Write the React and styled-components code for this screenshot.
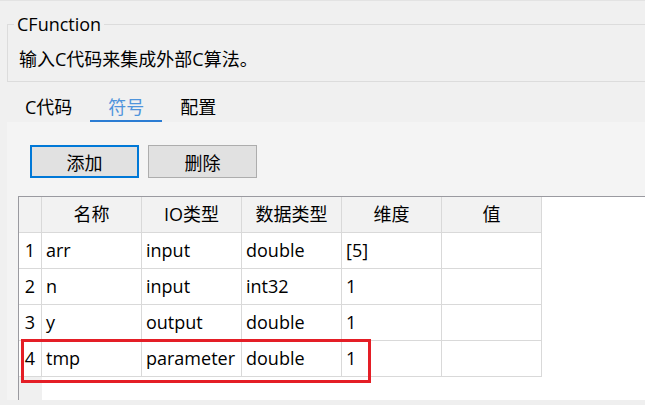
import React from 'react'
import styled, { createGlobalStyle } from 'styled-components'

const GlobalStyle = createGlobalStyle`
    html, body {
        margin: 0;
        padding: 0;
        background: #f0f0f0;
    }
    body {
        font-family: "Open Sans", "Noto Sans CJK SC", sans-serif;
        font-size: 18px;
        color: #000;
    }
`

const Window = styled.div`
    width: 645px;
    height: 405px;
    box-sizing: border-box;
    overflow: hidden;
    border-top: 1px solid #e3e3e3;
    padding-left: 7px;
    display: flex;
    flex-direction: column;
`

const GroupBox = styled.fieldset`
    margin: 11px 0 0 0;
    padding: 0 0 10px 0;
    border: 1px solid #dcdcdc;
    border-right: none;
    min-width: 0;
`

const Legend = styled.legend`
    margin-left: 6px;
    padding: 0 3px;
    line-height: 24px;
`

const Description = styled.div`
    padding: 11px 0 0 11px;
    line-height: 24px;
`

const TabBar = styled.div`
    display: flex;
    height: 40px;
`

const Tab = styled.div`
    box-sizing: border-box;
    height: 40px;
    padding: 13px 18px 0;
    line-height: 24px;
    color: ${p => (p.$active ? '#4f94dc' : '#000')};
    border-bottom: 2px solid ${p => (p.$active ? '#2b7cd3' : 'transparent')};
`

const Panel = styled.div`
    flex: 1;
    background: #f4f4f4;
    display: flex;
    flex-direction: column;
    padding-top: 23px;
    min-height: 0;
`

const ButtonRow = styled.div`
    display: flex;
    gap: 9px;
    margin-left: 23px;
`

const Button = styled.button`
    width: 109px;
    height: 33px;
    box-sizing: border-box;
    background: #e1e1e1;
    border: ${p => (p.$focused ? '2px solid #0078d7' : '1px solid #adadad')};
    font: inherit;
    color: #000;
    padding: 0;
`

const TableFrame = styled.div`
    position: relative;
    flex: 1;
    margin: 18px 0 0 11px;
    border-top: 1px solid #9a9aa0;
    border-left: 1px solid #9a9aa0;
    background: #fff;
    display: grid;
    grid-template-columns: 23px repeat(5, 100px) 1fr;
    grid-template-rows: repeat(5, 36px) 1fr;
`

const Cell = styled.div`
    box-sizing: border-box;
    border-right: 1px solid #d9d9d9;
    border-bottom: 1px solid #d9d9d9;
    background: ${p => (p.$head ? '#f2f2f2' : '#fff')};
    text-align: ${p => (p.$center ? 'center' : 'left')};
    padding-left: ${p => (p.$center ? 0 : 4)}px;
    line-height: 35px;
    white-space: nowrap;
`

const Filler = styled.div`
    background: ${p => (p.$grey ? '#f0f0f0' : '#fff')};
`

const Highlight = styled.div`
    position: absolute;
    left: 2px;
    top: 142px;
    width: 350px;
    height: 44px;
    box-sizing: border-box;
    border: 3px solid #e41e26;
    pointer-events: none;
`

const Footer = styled.div`
    height: 5px;
    margin-left: -7px;
    background: #efefef;
`

const columns = ['名称', 'IO类型', '数据类型', '维度', '值']

const rows = [
    ['arr', 'input', 'double', '[5]', ''],
    ['n', 'input', 'int32', '1', ''],
    ['y', 'output', 'double', '1', ''],
    ['tmp', 'parameter', 'double', '1', ''],
]

const tabs = ['C代码', '符号', '配置']

const App = () => {
    return (
        <Window>
            <GlobalStyle />
            <GroupBox>
                <Legend>CFunction</Legend>
                <Description>输入C代码来集成外部C算法。</Description>
            </GroupBox>
            <TabBar>
                {tabs.map(t =>
                    <Tab key={t} $active={t === '符号'}>{t}</Tab>
                )}
            </TabBar>
            <Panel>
                <ButtonRow>
                    <Button $focused>添加</Button>
                    <Button>删除</Button>
                </ButtonRow>
                <TableFrame>
                    <Cell $head $center />
                    {columns.map(c =>
                        <Cell key={c} $head $center>{c}</Cell>
                    )}
                    <Filler />
                    {rows.map((r, i) =>
                        <React.Fragment key={i}>
                            <Cell $center>{i + 1}</Cell>
                            {r.map((v, j) => <Cell key={j}>{v}</Cell>)}
                            <Filler />
                        </React.Fragment>
                    )}
                    <Filler $grey />
                    <Filler style={{ gridColumn: '2 / -1' }} />
                    <Highlight />
                </TableFrame>
            </Panel>
            <Footer />
        </Window>
    )
}

export default App
